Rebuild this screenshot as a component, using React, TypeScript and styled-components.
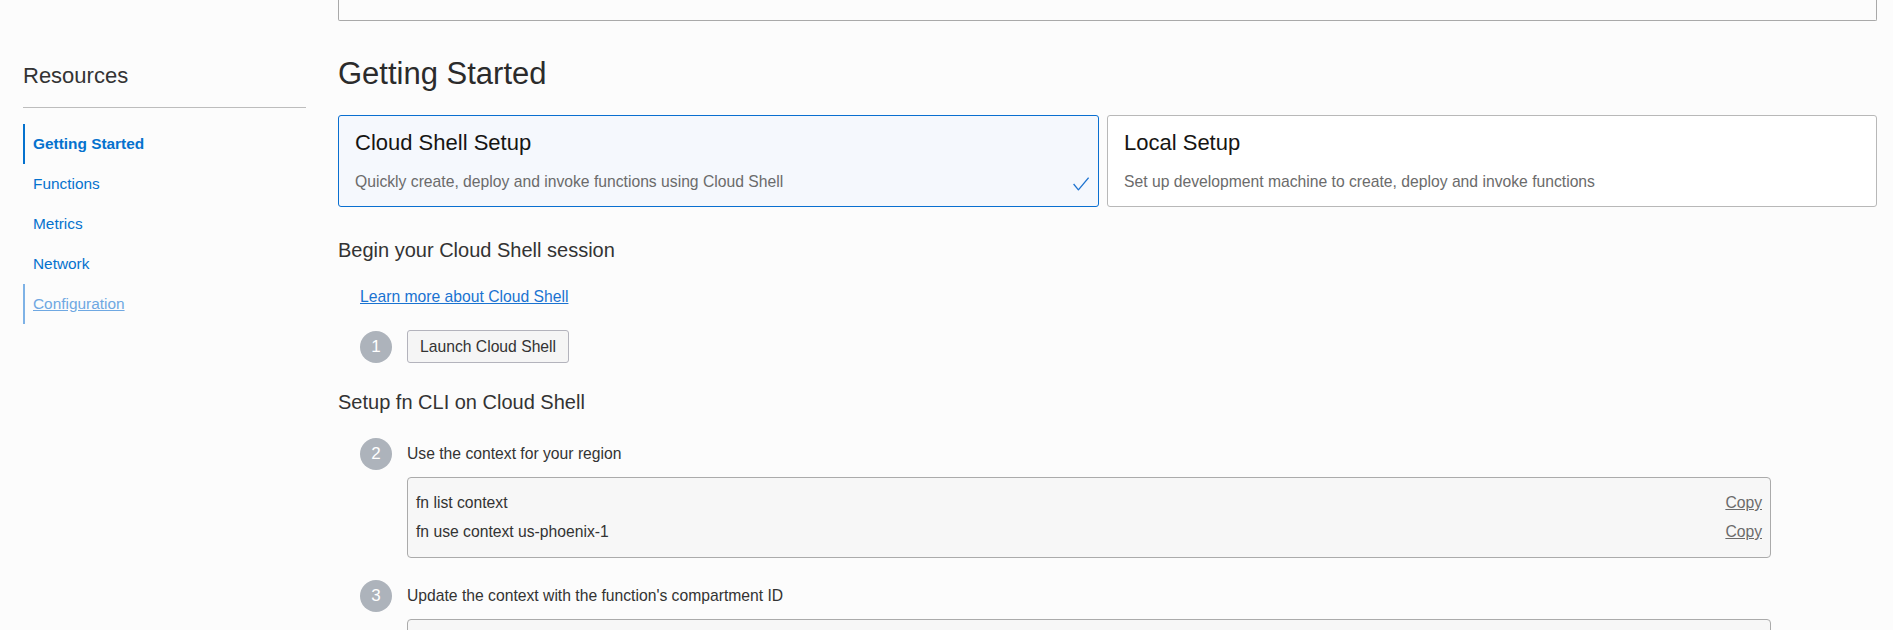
import styled, {createGlobalStyle} from "styled-components";

const GlobalStyle = createGlobalStyle`
  body {
    margin: 0;
    background: #fcfcfc;
    font-family: "Liberation Sans", Arial, sans-serif;
    color: #333;
  }
`;

type NavItem = {label: string, state?: "active" | "focus"};

const navItems: NavItem[] = [
  {label: "Getting Started", state: "active"},
  {label: "Functions"},
  {label: "Metrics"},
  {label: "Network"},
  {label: "Configuration", state: "focus"},
];

const CheckIcon = () => (
  <svg width="16" height="14" viewBox="0 0 16 14" fill="none">
    <polyline points="0.6,7 5.4,12.8 15.6,0.6" stroke="#1f74d0" strokeWidth="1.3" strokeLinejoin="round"/>
  </svg>
);

const CodeLine = ({text}: {text: string}) => (
  <LineRow>
    <span>{text}</span>
    <CopyLink href="#">Copy</CopyLink>
  </LineRow>
);

export default function App() {
  return (
    <Page>
      <GlobalStyle/>
      <Sidebar>
        <SideTitle>Resources</SideTitle>
        <Divider/>
        <Nav>
          {navItems.map((item) => (
            <NavLink key={item.label} href="#" $state={item.state}>{item.label}</NavLink>
          ))}
        </Nav>
      </Sidebar>
      <Main>
        <TopPanel/>
        <Heading>Getting Started</Heading>
        <Options>
          <OptionCard $selected>
            <OptionTitle>Cloud Shell Setup</OptionTitle>
            <OptionDesc>Quickly create, deploy and invoke functions using Cloud Shell</OptionDesc>
            <CheckMark><CheckIcon/></CheckMark>
          </OptionCard>
          <OptionCard>
            <OptionTitle>Local Setup</OptionTitle>
            <OptionDesc>Set up development machine to create, deploy and invoke functions</OptionDesc>
          </OptionCard>
        </Options>

        <SectionTitle $gap={31}>Begin your Cloud Shell session</SectionTitle>
        <LearnLink href="#">Learn more about Cloud Shell</LearnLink>
        <Step $first>
          <StepNumber>1</StepNumber>
          <LaunchButton>Launch Cloud Shell</LaunchButton>
        </Step>

        <SectionTitle $gap={27}>Setup fn CLI on Cloud Shell</SectionTitle>
        <Steps>
          <Step>
            <StepNumber>2</StepNumber>
            <StepBody>
              <StepLabel>Use the context for your region</StepLabel>
              <CodeBlock>
                <CodeLine text="fn list context"/>
                <CodeLine text="fn use context us-phoenix-1"/>
              </CodeBlock>
            </StepBody>
          </Step>
          <Step>
            <StepNumber>3</StepNumber>
            <StepBody>
              <StepLabel>Update the context with the function's compartment ID</StepLabel>
              <CodeBlock $empty/>
            </StepBody>
          </Step>
        </Steps>
      </Main>
    </Page>
  );
}

const Page = styled.div`
  display: flex;
  gap: 32px;
  padding: 0 16px 0 23px;
  height: 630px;
  overflow: hidden;
  box-sizing: border-box;
`;

const Sidebar = styled.aside`
  width: 283px;
  flex-shrink: 0;
  padding-top: 63px;
`;

const SideTitle = styled.h2`
  margin: 0;
  font-size: 22px;
  line-height: 26px;
  font-weight: normal;
  color: #333;
`;

const Divider = styled.hr`
  margin: 18px 0 16px;
  border: none;
  border-top: 1px solid #bdbdbd;
`;

const Nav = styled.nav`
  display: flex;
  flex-direction: column;
`;

const NavLink = styled.a<{$state?: "active" | "focus"}>`
  display: flex;
  align-items: center;
  height: 40px;
  padding-left: 8px;
  border-left: 2px solid ${(p) => p.$state === "active" ? "#0572ce" : p.$state === "focus" ? "#7eb2e6" : "transparent"};
  font-size: 15.4px;
  font-weight: ${(p) => p.$state === "active" ? "bold" : "normal"};
  color: ${(p) => p.$state === "focus" ? "#6fa8e2" : "#0572ce"};
  text-decoration: ${(p) => p.$state === "focus" ? "underline" : "none"};
`;

const Main = styled.main`
  flex: 1;
  display: flex;
  flex-direction: column;
  align-items: flex-start;
  & > * {
    flex-shrink: 0;
  }
`;

const TopPanel = styled.div`
  align-self: stretch;
  height: 20px;
  border: 1px solid #a9a9a9;
  border-top: none;
  border-radius: 0 0 2px 2px;
`;

const Heading = styled.h1`
  margin: 34px 0 0;
  font-size: 31px;
  line-height: 37px;
  font-weight: normal;
  color: #2b2b2b;
`;

const Options = styled.div`
  align-self: stretch;
  display: grid;
  grid-template-columns: 761px 1fr;
  gap: 8px;
  margin-top: 23px;
`;

const OptionCard = styled.div<{$selected?: boolean}>`
  position: relative;
  height: 92px;
  box-sizing: border-box;
  padding: 14px 16px;
  border: 1px solid ${(p) => p.$selected ? "#0a6fd0" : "#b8b8b8"};
  border-radius: 3px;
  background: ${(p) => p.$selected ? "#f5f8fd" : "#ffffff"};
`;

const OptionTitle = styled.div`
  font-size: 22px;
  line-height: 26px;
  color: #161513;
`;

const OptionDesc = styled.div`
  margin-top: 16px;
  font-size: 15.7px;
  line-height: 20px;
  color: #6b6b6b;
`;

const CheckMark = styled.span`
  position: absolute;
  right: 9px;
  bottom: 15px;
  display: flex;
`;

const SectionTitle = styled.h3<{$gap: number}>`
  margin: ${(p) => p.$gap}px 0 0;
  font-size: 20px;
  line-height: 24px;
  font-weight: normal;
  color: #333;
`;

const LearnLink = styled.a`
  margin: 25px 0 0 22px;
  font-size: 15.7px;
  line-height: 20px;
  color: #1a73d1;
  text-decoration: underline;
`;

const Steps = styled.div`
  display: flex;
  flex-direction: column;
  gap: 22px;
  margin-top: 24px;
`;

const Step = styled.div<{$first?: boolean}>`
  display: flex;
  align-items: flex-start;
  gap: 15px;
  margin-left: 22px;
  ${(p) => p.$first && "margin-top: 23px; align-items: center;"}
`;

const StepNumber = styled.span`
  width: 32px;
  height: 32px;
  flex-shrink: 0;
  border-radius: 50%;
  background: #adb3bb;
  color: #ffffff;
  font-size: 17px;
  display: flex;
  align-items: center;
  justify-content: center;
`;

const LaunchButton = styled.button`
  height: 33px;
  padding: 0 12px;
  border: 1px solid #b3b3bc;
  border-radius: 3px;
  background: #f5f5f5;
  font-family: inherit;
  font-size: 15.7px;
  color: #333;
`;

const StepBody = styled.div`
  display: flex;
  flex-direction: column;
  gap: 7px;
`;

const StepLabel = styled.div`
  font-size: 15.7px;
  line-height: 32px;
  color: #333;
`;

const CodeBlock = styled.div<{$empty?: boolean}>`
  width: 1364px;
  min-height: ${(p) => p.$empty ? "81px" : "auto"};
  box-sizing: border-box;
  padding: 10px 8px 11px;
  border: 1px solid #ababab;
  border-radius: 4px;
  background: #f7f7f7;
`;

const LineRow = styled.div`
  display: flex;
  justify-content: space-between;
  font-size: 15.7px;
  line-height: 29px;
  color: #333;
`;

const CopyLink = styled.a`
  color: #6b6b6b;
  text-decoration: underline;
`;
